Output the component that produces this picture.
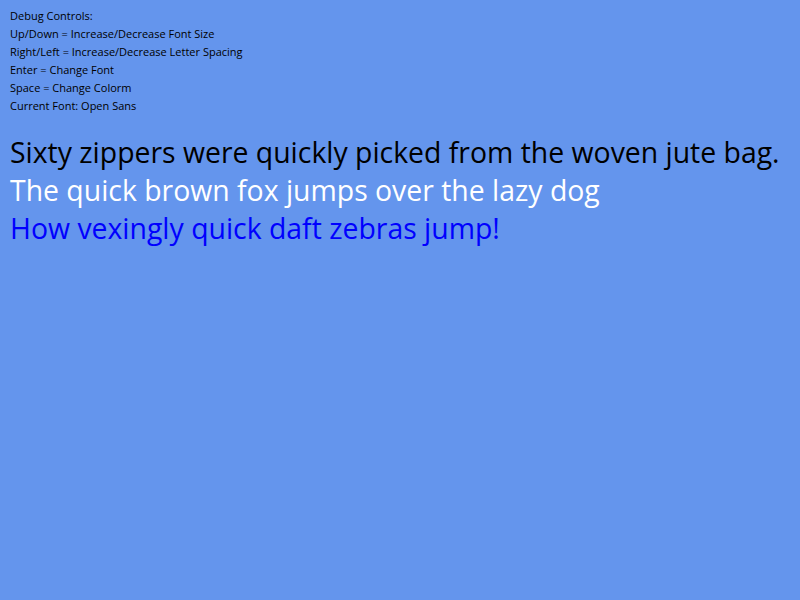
export default function App() {
  return (
    <div className="w-[800px] h-[600px] bg-[#6495ed] px-[10px] pt-[7px]" style={{ fontFamily: '"Open Sans", sans-serif' }}>
      <div className="text-[11px] leading-[18px] text-black">
        <div>Debug Controls:</div>
        <div>Up/Down = Increase/Decrease Font Size</div>
        <div>Right/Left = Increase/Decrease Letter Spacing</div>
        <div>Enter = Change Font</div>
        <div>Space = Change Colorm</div>
        <div>Current Font: Open Sans</div>
      </div>
      <div className="mt-[18px] text-[28.4px] leading-[38px] whitespace-nowrap">
        <div className="text-black">Sixty zippers were quickly picked from the woven jute bag.</div>
        <div className="text-white">The quick brown fox jumps over the lazy dog</div>
        <div className="text-[#0000ff]">How vexingly quick daft zebras jump!</div>
      </div>
    </div>
  );
}
